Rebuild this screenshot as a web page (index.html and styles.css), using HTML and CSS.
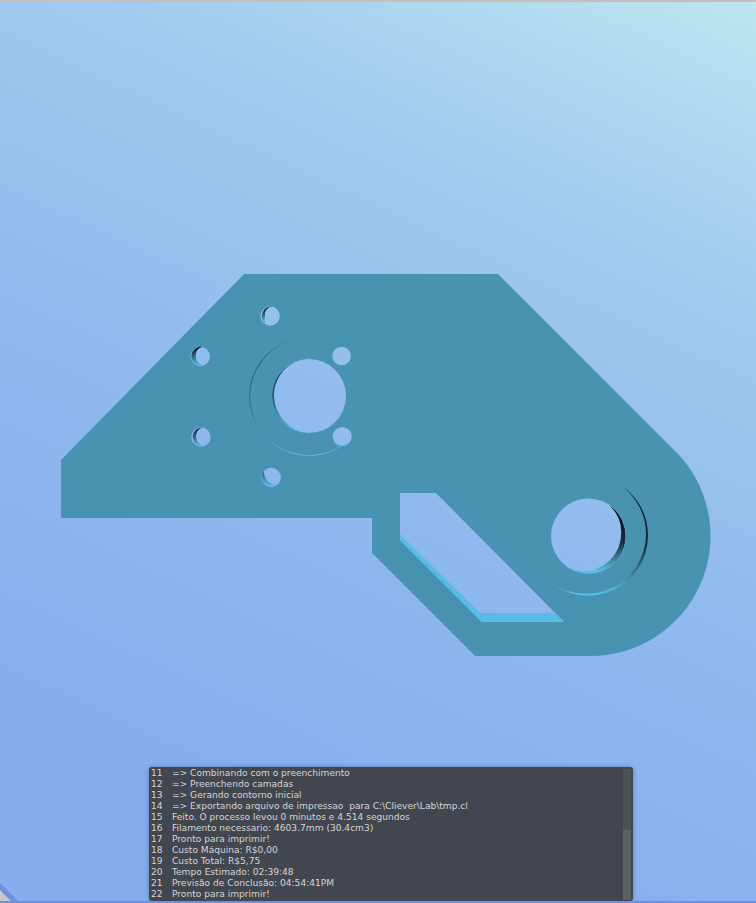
FILE: index.html
```html
<!DOCTYPE html>
<html lang="en">
<head>
  <meta charset="UTF-8" />
  <title>Cliever Lab</title>
  <link rel="stylesheet" href="styles.css">
</head>
<body>
  <main class="viewer">
    <div class="top-edge"></div>

    <!-- 3D view of the part -->
    <svg class="scene" width="756" height="903" viewBox="0 0 756 903">
      <defs>
        <linearGradient id="wall" x1="0" y1="0" x2="0" y2="1">
          <stop offset="0" stop-color="#06141c"/>
          <stop offset="0.35" stop-color="#1f4a5c"/>
          <stop offset="0.7" stop-color="#3f8fb0"/>
          <stop offset="1" stop-color="#58c4ec"/>
        </linearGradient>
        <linearGradient id="wallLow" x1="0" y1="0" x2="0" y2="1">
          <stop offset="0" stop-color="#1f4a5c"/>
          <stop offset="0.5" stop-color="#3f8fb0"/>
          <stop offset="1" stop-color="#58c4ec"/>
        </linearGradient>
        <linearGradient id="wallRight" x1="0" y1="0" x2="0" y2="1">
          <stop offset="0" stop-color="#04090d"/>
          <stop offset="0.55" stop-color="#14303c"/>
          <stop offset="0.8" stop-color="#3f7f98"/>
          <stop offset="1" stop-color="#58c4ec"/>
        </linearGradient>
        <linearGradient id="ringLeft" x1="0" y1="0" x2="0" y2="1">
          <stop offset="0" stop-color="#4892b2"/>
          <stop offset="0.2" stop-color="#1f4a5c"/>
          <stop offset="0.55" stop-color="#2a6078"/>
          <stop offset="1" stop-color="#58c4ec"/>
        </linearGradient>
      </defs>

      <path class="part" fill-rule="evenodd" d="M61 460 L244 274 H498 L680 456 A120 120 0 0 1 590 656 H475 L372 553 V518 H61 Z
        M400 493 H436 L564 622 H482 L400 540 Z
        M272 396 a37 37 0 1 0 74 0 a37 37 0 1 0 -74 0 Z
        M551 536 a37.5 37.5 0 1 0 75 0 a37.5 37.5 0 1 0 -75 0 Z
        M260.5 316 a9.7 9.7 0 1 0 19.4 0 a9.7 9.7 0 1 0 -19.4 0 Z
        M190.6 356.5 a9.7 9.7 0 1 0 19.4 0 a9.7 9.7 0 1 0 -19.4 0 Z
        M191.3 437 a9.7 9.7 0 1 0 19.4 0 a9.7 9.7 0 1 0 -19.4 0 Z
        M261.5 477.5 a9.7 9.7 0 1 0 19.4 0 a9.7 9.7 0 1 0 -19.4 0 Z
        M332.3 356 a9.3 9.3 0 1 0 18.6 0 a9.3 9.3 0 1 0 -18.6 0 Z
        M332.7 436.5 a9.5 9.5 0 1 0 19 0 a9.5 9.5 0 1 0 -19 0 Z"/>

      <!-- slot wall -->
      <polygon class="slot-wall" points="400,534 480,613 555,613 564,622 482,622 400,540"/>

      <!-- small hole walls -->
      <path fill="url(#wall)" d="M272 306.4 A9.7 9.7 0 0 0 266 324 A10 10 0 0 1 265 316 A8 8 0 0 1 272 306.4 Z"/>
      <path fill="url(#wall)" d="M202 346.9 A9.7 9.7 0 0 0 200 366.2 L205 365.6 A10 10 0 0 1 195.6 356 A9 9 0 0 1 202 346.9 Z"/>
      <path fill="url(#wall)" d="M202.5 427.4 A9.7 9.7 0 0 0 201 446.7 L206 446 A10 10 0 0 1 196 437 A9 9 0 0 1 202.5 427.4 Z"/>
      <path fill="url(#wallLow)" d="M264 471 A9.7 9.7 0 0 0 277 485 A13 13 0 0 1 264 471 Z"/>
      <path class="wall-cyan" d="M334 442 A9.5 9.5 0 0 0 349 443 A13 13 0 0 1 334 442 Z"/>

      <!-- big hole walls -->
      <path fill="url(#ringLeft)" d="M299 360.5 A37 37 0 0 0 272 396 A37 37 0 0 0 309 433 A38 38 0 0 1 274 396 A37 37 0 0 1 299 360.5 Z"/>
      <path fill="url(#wallRight)" d="M609 505 A37.5 37.5 0 0 1 597 572.5 L597 568.5 A37 37 0 0 0 621 536 A37 37 0 0 0 609 505 Z"/>
      <path class="wall-cyan" d="M563 564 A37.5 37.5 0 0 0 597 572.5 L597 569 A38 38 0 0 1 563 564 Z"/>

      <!-- counterbore edges -->
      <path class="ring" stroke="url(#ringLeft)" d="M309 337.5 A59 59 0 1 0 340 446.5"/>
      <path fill="url(#wallRight)" d="M622.4 486.4 A60 60 0 0 1 648 535.5 A60 60 0 0 1 547.1 579.4 A60 60 0 0 0 646 535.5 A60 60 0 0 0 622.4 486.4 Z"/>

      <!-- window corner -->
      <polygon class="corner-edge" points="0,883 20,903 0,903"/>
      <polygon class="corner" points="0,890 13,903 0,903"/>
    </svg>

    <!-- slicer log -->
    <section class="console">
      <div class="log">
        <div class="row"><span class="num">11</span><span class="line">=&gt; Combinando com o preenchimento</span></div>
        <div class="row"><span class="num">12</span><span class="line">=&gt; Preenchendo camadas</span></div>
        <div class="row"><span class="num">13</span><span class="line">=&gt; Gerando contorno inicial</span></div>
        <div class="row"><span class="num">14</span><span class="line">=&gt; Exportando arquivo de impressao  para C:\Cliever\Lab\tmp.cl</span></div>
        <div class="row"><span class="num">15</span><span class="line">Feito. O processo levou 0 minutos e 4.514 segundos</span></div>
        <div class="row"><span class="num">16</span><span class="line">Filamento necessario: 4603.7mm (30.4cm3)</span></div>
        <div class="row"><span class="num">17</span><span class="line">Pronto para imprimir!</span></div>
        <div class="row"><span class="num">18</span><span class="line">Custo Máquina: R$0,00</span></div>
        <div class="row"><span class="num">19</span><span class="line">Custo Total: R$5,75</span></div>
        <div class="row"><span class="num">20</span><span class="line">Tempo Estimado: 02:39:48</span></div>
        <div class="row"><span class="num">21</span><span class="line">Previsão de Conclusão: 04:54:41PM</span></div>
        <div class="row"><span class="num">22</span><span class="line">Pronto para imprimir!</span></div>
      </div>
      <div class="scrollbar"><div class="thumb"></div></div>
    </section>

    <div class="bottom-tab"></div>
  </main>
</body>
</html>
```

FILE: styles.css
```css
html, body {
  margin: 0;
  height: 100%;
  overflow: hidden;
}

.viewer {
  position: relative;
  width: 756px;
  height: 903px;
  box-sizing: border-box;
  border-bottom: 2px solid #6f90df;
  background: linear-gradient(205deg, #bde6f0 0%, #a0caef 25%, #8fb8ee 55%, #85adee 85%, #85adee 100%);
  overflow: hidden;
}

.top-edge {
  height: 2px;
  background: linear-gradient(#c4bfb8 50%, #a9c4e4 50%);
}

.scene {
  position: absolute;
  top: 0;
  left: 0;
}

.part {
  fill: #4892b2;
}

.slot-wall,
.wall-cyan {
  fill: #58bde6;
}

.ring {
  fill: none;
  stroke-width: 0.8;
}

.corner-edge {
  fill: #6f90df;
}

.corner {
  fill: #c8c8c8;
}

/* Log panel */
.console {
  position: absolute;
  left: 149px;
  bottom: 0;
  width: 484px;
  height: 134px;
  box-sizing: border-box;
  padding: 1px 2px 1px;
  display: flex;
  justify-content: space-between;
  background: #42464e;
  border-radius: 3px;
  box-shadow: 0 0 4px rgba(40, 50, 90, 0.45);
  overflow: hidden;
}

.log {
  font-family: "DejaVu Sans", sans-serif;
  font-size: 9.08px;
  line-height: 11px;
  color: #d4d6d9;
}

.row {
  display: flex;
}

.num {
  width: 21px;
}

.line {
  white-space: pre;
}

.scrollbar {
  width: 8px;
  margin-top: 1px;
  background: #4e5258;
  display: flex;
  flex-direction: column;
  justify-content: flex-end;
}

.thumb {
  height: 70px;
  background: #5d6167;
}

.bottom-tab {
  position: absolute;
  left: 380px;
  bottom: -2px;
  width: 22px;
  height: 2px;
  background: #3a3e46;
  border-radius: 4px 4px 0 0;
}
```
